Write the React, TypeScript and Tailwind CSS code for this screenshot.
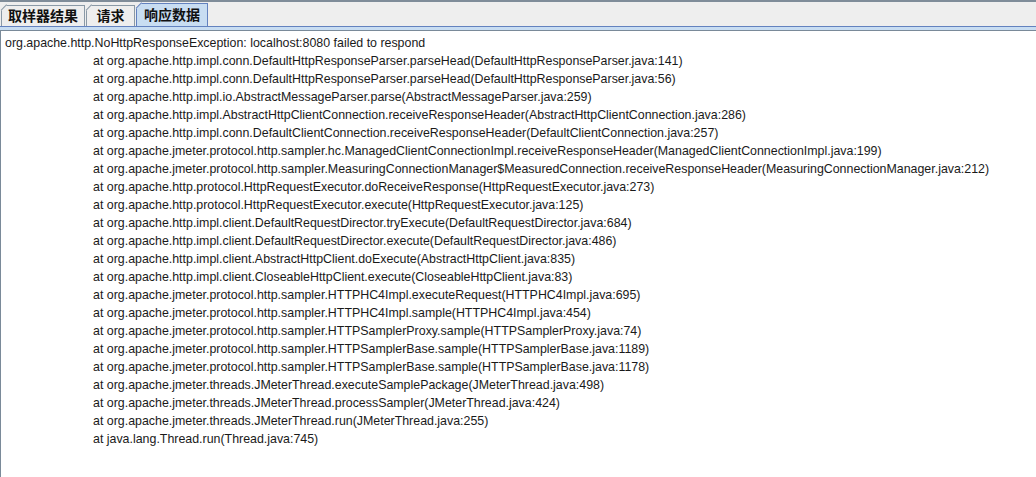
const frames = [
  "org.apache.http.impl.conn.DefaultHttpResponseParser.parseHead(DefaultHttpResponseParser.java:141)",
  "org.apache.http.impl.conn.DefaultHttpResponseParser.parseHead(DefaultHttpResponseParser.java:56)",
  "org.apache.http.impl.io.AbstractMessageParser.parse(AbstractMessageParser.java:259)",
  "org.apache.http.impl.AbstractHttpClientConnection.receiveResponseHeader(AbstractHttpClientConnection.java:286)",
  "org.apache.http.impl.conn.DefaultClientConnection.receiveResponseHeader(DefaultClientConnection.java:257)",
  "org.apache.jmeter.protocol.http.sampler.hc.ManagedClientConnectionImpl.receiveResponseHeader(ManagedClientConnectionImpl.java:199)",
  "org.apache.jmeter.protocol.http.sampler.MeasuringConnectionManager$MeasuredConnection.receiveResponseHeader(MeasuringConnectionManager.java:212)",
  "org.apache.http.protocol.HttpRequestExecutor.doReceiveResponse(HttpRequestExecutor.java:273)",
  "org.apache.http.protocol.HttpRequestExecutor.execute(HttpRequestExecutor.java:125)",
  "org.apache.http.impl.client.DefaultRequestDirector.tryExecute(DefaultRequestDirector.java:684)",
  "org.apache.http.impl.client.DefaultRequestDirector.execute(DefaultRequestDirector.java:486)",
  "org.apache.http.impl.client.AbstractHttpClient.doExecute(AbstractHttpClient.java:835)",
  "org.apache.http.impl.client.CloseableHttpClient.execute(CloseableHttpClient.java:83)",
  "org.apache.jmeter.protocol.http.sampler.HTTPHC4Impl.executeRequest(HTTPHC4Impl.java:695)",
  "org.apache.jmeter.protocol.http.sampler.HTTPHC4Impl.sample(HTTPHC4Impl.java:454)",
  "org.apache.jmeter.protocol.http.sampler.HTTPSamplerProxy.sample(HTTPSamplerProxy.java:74)",
  "org.apache.jmeter.protocol.http.sampler.HTTPSamplerBase.sample(HTTPSamplerBase.java:1189)",
  "org.apache.jmeter.protocol.http.sampler.HTTPSamplerBase.sample(HTTPSamplerBase.java:1178)",
  "org.apache.jmeter.threads.JMeterThread.executeSamplePackage(JMeterThread.java:498)",
  "org.apache.jmeter.threads.JMeterThread.processSampler(JMeterThread.java:424)",
  "org.apache.jmeter.threads.JMeterThread.run(JMeterThread.java:255)",
  "java.lang.Thread.run(Thread.java:745)",
];

function Tab({ label, width, selected }: { label: string; width: string; selected?: boolean }) {
  return (
    <div
      className={
        selected
          ? `relative h-[23px] ${width} flex items-center justify-center bg-[#c8ddf2] border border-b-0 border-[#6382bf] font-bold text-[14px] text-[#111]`
          : `relative h-[21px] ${width} flex items-center justify-center bg-[#eeeeee] border border-b-0 border-[#8a99a6] font-bold text-[14px] text-[#111]`
      }
    >
      {/* Metal-style clipped corner */}
      <span className="absolute -left-px -top-px w-[6px] h-[6px] bg-[#eeeeee] [clip-path:polygon(0_0,100%_0,0_100%)]" />
      <span
        className={
          selected
            ? "absolute -left-px -top-px w-[8px] h-px bg-[#6382bf] origin-top-left rotate-[135deg] translate-x-[6px]"
            : "absolute -left-px -top-px w-[8px] h-px bg-[#8a99a6] origin-top-left rotate-[135deg] translate-x-[6px]"
        }
      />
      {label}
    </div>
  );
}

export default function App() {
  return (
    <div
      className="w-[1036px] h-[477px] bg-[#eeeeee] flex flex-col overflow-hidden"
      style={{ fontFamily: '"Liberation Sans", "Noto Sans CJK SC", sans-serif' }}
    >
      <div className="h-[2px] bg-[#7f8c99]" />
      {/* Tabs */}
      <div className="flex items-end pl-[1px] h-[24px] gap-[1px]">
        <Tab label="取样器结果" width="w-[84px]" />
        <Tab label="请求" width="w-[49px]" />
        <Tab label="响应数据" width="w-[72px]" selected />
      </div>
      <div className="h-[1px] bg-[#6382bf]" />
      <div className="h-[3px] bg-[#c8ddf2]" />
      <div className="h-[1px] bg-[#7a8a99]" />
      {/* Content */}
      <div className="flex-1 bg-white border-l border-[#7a8a99] pt-[3px] text-[12.4px] text-[#1a1a1a] leading-[18px]">
        <div className="pl-[4px]">org.apache.http.NoHttpResponseException: localhost:8080 failed to respond</div>
        {frames.map((f, i) => (
          <div key={i} className="pl-[92px] whitespace-nowrap">
            at {f}
          </div>
        ))}
      </div>
    </div>
  );
}
